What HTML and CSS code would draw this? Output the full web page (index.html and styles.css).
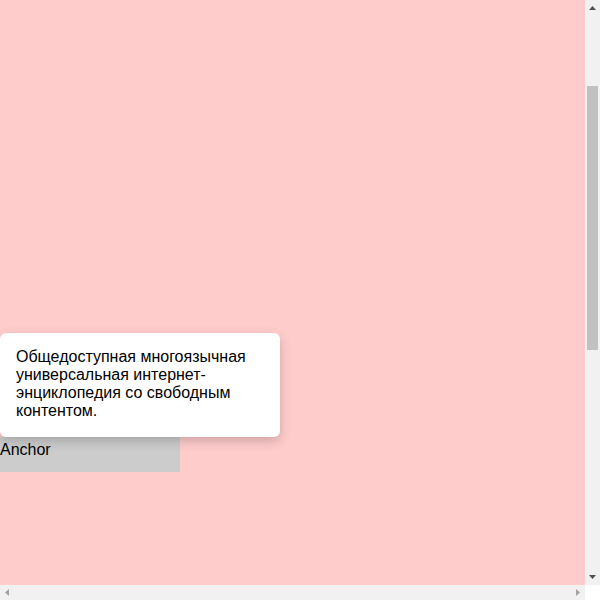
FILE: index.html
```html
<!DOCTYPE html>
<html>
<head>
<meta charset="utf-8">
<link rel="stylesheet" href="styles.css">
</head>
<body>
<div class="viewport" id="viewport">
  <div class="spacer-top"></div>
  <div class="anchor-wrap">
    <div class="anchor">Anchor</div>
    <div class="tooltip">Общедоступная многоязычная универсальная интернет-энциклопедия со свободным контентом.</div>
  </div>
  <div class="spacer-bottom"></div>
</div>
<div class="vscroll">
  <div class="sb-btn"><svg width="15" height="15" viewBox="0 0 15 15"><polygon points="4,10 11,10 7.5,6" fill="#505050"/></svg></div>
  <div class="sb-track-v"><div class="thumb-v"></div></div>
  <div class="sb-btn"><svg width="15" height="15" viewBox="0 0 15 15"><polygon points="4,5 11,5 7.5,9" fill="#505050"/></svg></div>
</div>
<div class="hscroll">
  <div class="sb-btn"><svg width="15" height="15" viewBox="0 0 15 15"><polygon points="9,4 9,11 5,7.5" fill="#a3a3a3"/></svg></div>
  <div class="sb-track-h"></div>
  <div class="sb-btn"><svg width="15" height="15" viewBox="0 0 15 15"><polygon points="6,4 6,11 10,7.5" fill="#a3a3a3"/></svg></div>
</div>
<div class="corner"></div>
<script src="script.js"></script>
</body>
</html>
```
FILE: styles.css
```css
html, body {
  margin: 0;
  padding: 0;
  overflow: hidden;
}
body {
  font-family: "Liberation Sans", Arial, sans-serif;
  font-size: 16px;
  color: #000;
}
.viewport {
  width: 600px;
  height: 600px;
  overflow: scroll;
  background: #ffcccc;
}
.spacer-top {
  height: 594px;
}
.anchor-wrap {
  position: relative;
  width: 180px;
}
.anchor {
  height: 31px;
  padding-top: 4px;
  background: #cccccc;
  line-height: 18px;
}
.tooltip {
  position: absolute;
  left: 0;
  bottom: 100%;
  width: 248px;
  padding: 15px 16px 17px;
  background: #fff;
  border-radius: 6px;
  box-shadow: 0 4px 12px rgba(0, 0, 0, 0.2);
  line-height: 18px;
}
.spacer-bottom {
  height: 601px;
}
.vscroll {
  position: fixed;
  top: 0;
  right: 0;
  width: 15px;
  height: 585px;
  background: #f1f1f1;
  display: flex;
  flex-direction: column;
}
.hscroll {
  position: fixed;
  left: 0;
  bottom: 0;
  width: 585px;
  height: 15px;
  background: #f1f1f1;
  display: flex;
}
.corner {
  position: fixed;
  right: 0;
  bottom: 0;
  width: 15px;
  height: 15px;
  background: #fff;
}
.sb-btn {
  width: 15px;
  height: 15px;
  flex: none;
}
.sb-btn svg {
  display: block;
}
.sb-track-v {
  flex: 1;
  padding: 71px 2px 0;
}
.thumb-v {
  height: 264px;
  background: #c1c1c1;
}
.sb-track-h {
  flex: 1;
}
```
FILE: script.js
```js
document.getElementById('viewport').scrollTop = 157;
```
